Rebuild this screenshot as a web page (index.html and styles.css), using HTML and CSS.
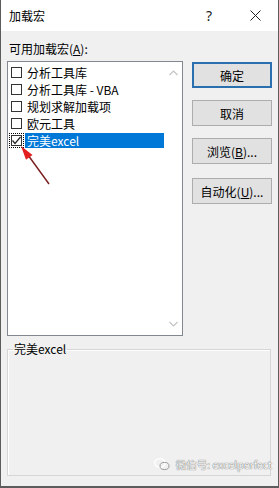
FILE: index.html
```html
<!DOCTYPE html>
<html lang="zh-CN">

<head>
  <meta charset="UTF-8" />
  <meta name="viewport" content="width=device-width, initial-scale=1.0" />
  <title>加载宏</title>
  <link rel="stylesheet" href="styles.css">
</head>

<body>
  <div class="dialogo">
    <div class="titulo">
      <span class="titulo-texto">加载宏</span>
      <span class="titulo-btn">?</span>
      <span class="titulo-btn">
        <svg width="11" height="11" viewBox="0 0 11 11">
          <path d="M0.5 0.5 L10.5 10.5 M10.5 0.5 L0.5 10.5" stroke="#222" stroke-width="1" fill="none" />
        </svg>
      </span>
    </div>

    <div class="cuerpo">
      <div class="etiqueta">可用加载宏(<u>A</u>):</div>

      <div class="principal">
        <div class="lista">
          <div class="items">
            <div class="item"><span class="check"></span><span class="texto">分析工具库</span></div>
            <div class="item"><span class="check"></span><span class="texto">分析工具库 - VBA</span></div>
            <div class="item"><span class="check"></span><span class="texto">规划求解加载项</span></div>
            <div class="item"><span class="check"></span><span class="texto">欧元工具</span></div>
            <div class="item activo">
              <span class="check marcado">
                <svg width="9" height="9" viewBox="0 0 9 9">
                  <path d="M0.5 4.5 L3 7.5 L8.5 1" stroke="#222" stroke-width="1.2" fill="none" />
                </svg>
              </span>
              <span class="texto">完美excel</span>
            </div>
          </div>
          <div class="scroll">
            <svg width="9" height="6" viewBox="0 0 9 6">
              <path d="M0.5 5 L4.5 1 L8.5 5" stroke="#c4c4c4" stroke-width="1.2" fill="none" />
            </svg>
            <svg width="9" height="6" viewBox="0 0 9 6">
              <path d="M0.5 1 L4.5 5 L8.5 1" stroke="#c4c4c4" stroke-width="1.2" fill="none" />
            </svg>
          </div>
        </div>

        <div class="botones">
          <button class="btn defecto">确定</button>
          <button class="btn">取消</button>
          <button class="btn">浏览(<u>B</u>)...</button>
          <button class="btn separado">自动化(<u>U</u>)...</button>
        </div>
      </div>

      <fieldset class="grupo">
        <legend>完美excel</legend>
      </fieldset>
    </div>

    <!-- flecha roja encima de la lista -->
    <svg class="flecha" width="40" height="46" viewBox="0 0 40 46">
      <path d="M34 42 L13 13" stroke="#7a1c1c" stroke-width="1.4" fill="none" />
      <path d="M6 4 L17.5 13 L11 17.7 Z" fill="#e3201f" />
    </svg>

    <div class="marca">
      <svg width="16" height="13" viewBox="0 0 16 13">
        <ellipse cx="6" cy="5" rx="5.3" ry="4.3" fill="none" stroke="#fff" stroke-width="1.3" />
        <ellipse cx="10.5" cy="8" rx="4.5" ry="3.6" fill="none" stroke="#999" stroke-width="1" />
      </svg>
      <span>微信号: excelperfect</span>
    </div>
  </div>
</body>

</html>
```

FILE: styles.css
```css
body {
  margin: 0;
  padding: 0;
  font-family: "Noto Sans CJK SC", "Noto Sans", sans-serif;
  font-size: 12px;
  color: #000;
  background: #f0f0f0;
}

.dialogo {
  position: relative;
  width: 279px;
  height: 488px;
  box-sizing: border-box;
  border-left: 1px solid #5c5c5c;
  border-right: 1px solid #5c5c5c;
  border-bottom: 2px solid #5c5c5c;
  display: flex;
  flex-direction: column;
}

.titulo {
  height: 31px;
  background: #fff;
  display: flex;
  align-items: center;
}

.titulo-texto {
  flex: 1;
  padding-left: 8px;
  font-size: 12px;
}

.titulo-btn {
  width: 46px;
  height: 31px;
  display: flex;
  align-items: center;
  justify-content: center;
  font-family: "Noto Sans", sans-serif;
  font-size: 14px;
  color: #222;
}

.cuerpo {
  flex: 1;
  background: #f0f0f0;
  padding: 10px 5px 0 6px;
}

.etiqueta {
  line-height: 16px;
  height: 16px;
  margin-left: 2px;
  margin-bottom: 4px;
}

.principal {
  display: flex;
  align-items: flex-start;
}

.lista {
  width: 176px;
  height: 275px;
  box-sizing: border-box;
  border: 1px solid #828790;
  background: #fff;
  display: flex;
}

.items {
  flex: 1;
  padding: 2px 1px 0 3px;
}

.item {
  height: 17px;
  display: flex;
  align-items: center;
}

.check {
  width: 11px;
  height: 11px;
  box-sizing: border-box;
  border: 1px solid #333;
  background: #fff;
  display: flex;
  align-items: center;
  justify-content: center;
  margin-right: 3px;
}

.check.marcado {
  outline: 1px dotted #000;
  outline-offset: 1px;
}

.texto {
  flex: 1;
  height: 15px;
  line-height: 15px;
  padding-left: 2px;
  white-space: nowrap;
}

.activo .texto {
  background: #0078d7;
  color: #fff;
}

.scroll {
  width: 17px;
  display: flex;
  flex-direction: column;
  align-items: center;
  justify-content: space-between;
  padding: 8px 0 8px;
}

.botones {
  display: flex;
  flex-direction: column;
  gap: 12px;
  margin-left: 9px;
  margin-top: 1px;
}

.btn {
  width: 80px;
  height: 26px;
  box-sizing: border-box;
  background: #e1e1e1;
  border: 1px solid #adadad;
  font-family: "Noto Sans CJK SC", "Noto Sans", sans-serif;
  font-size: 12px;
  color: #000;
  padding: 0;
}

.btn.defecto {
  border: 2px solid #2a6fae;
}

.btn.separado {
  margin-top: 2px;
}

.grupo {
  margin: 5px 2px 0 0;
  padding: 0 4px;
  height: 135px;
  box-sizing: border-box;
  border: 1px solid #d6d6d6;
  box-shadow: inset 1px 1px 0 #fff;
}

.grupo legend {
  padding: 0 1px;
  line-height: 16px;
  margin-left: 1px;
}

.flecha {
  position: absolute;
  left: 14px;
  top: 142px;
}

.marca {
  position: absolute;
  right: 6px;
  bottom: 14px;
  display: flex;
  align-items: center;
  gap: 6px;
  font-size: 10.5px;
  color: #f6f6f6;
  text-shadow: 0 0 1px #666, 0 0 1px #888;
}
```
